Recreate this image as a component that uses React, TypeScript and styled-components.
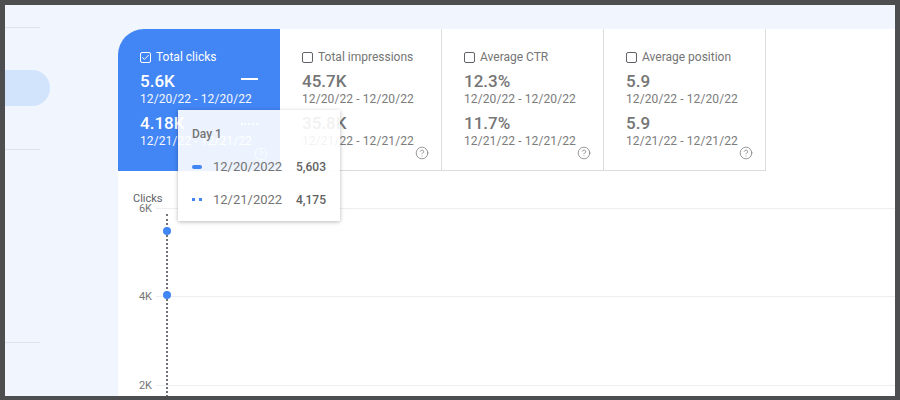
import React from 'react'
import styled, { createGlobalStyle } from 'styled-components'
import { Check, CircleHelp } from 'lucide-react'

const metrics = [
  { title: 'Total clicks', first: '5.6K', second: '4.18K', active: true },
  { title: 'Total impressions', first: '45.7K', second: '35.8K', active: false },
  { title: 'Average CTR', first: '12.3%', second: '11.7%', active: false },
  { title: 'Average position', first: '5.9', second: '5.9', active: false },
]

const App = (): React.ReactElement => (
  <>
    <GlobalStyle />
    <Frame>
      <Sidebar>
        <SideDivider />
        <ActivePill />
        <SideDivider $gap={43} />
        <SideDivider $gap={192} />
      </Sidebar>
      <Panel>
        <Tabs>
          {metrics.map((m) => (
            <Tab key={m.title} $active={m.active}>
              <TabTitle>
                <Checkbox $active={m.active}>
                  {m.active && <Check size={9} strokeWidth={2.5} />}
                </Checkbox>
                {m.title}
              </TabTitle>
              <MetricRow>
                <Value>{m.first}</Value>
                {m.active && <SolidDash />}
              </MetricRow>
              <DateRange>12/20/22 - 12/20/22</DateRange>
              <MetricRow>
                <Value>{m.second}</Value>
                {m.active && <DottedDash />}
              </MetricRow>
              <DateRange>12/21/22 - 12/21/22</DateRange>
              <HelpIcon>
                <CircleHelp size={14} strokeWidth={1.25} />
              </HelpIcon>
            </Tab>
          ))}
        </Tabs>
        <Chart>
          <ChartTitle>Clicks</ChartTitle>
          {['6K', '4K', '2K'].map((label) => (
            <GridRow key={label}>
              <AxisLabel>{label}</AxisLabel>
              <GridLine />
            </GridRow>
          ))}
          <HoverLine />
          <Dot $top={48} />
          <Dot $top={112} />
        </Chart>
        <Tooltip>
          <TooltipTitle>Day 1</TooltipTitle>
          <TooltipRow>
            <PillMark />
            <TooltipDate>12/20/2022</TooltipDate>
            <TooltipValue>5,603</TooltipValue>
          </TooltipRow>
          <TooltipRow>
            <DotsMark>
              <i />
              <i />
            </DotsMark>
            <TooltipDate>12/21/2022</TooltipDate>
            <TooltipValue>4,175</TooltipValue>
          </TooltipRow>
        </Tooltip>
      </Panel>
    </Frame>
  </>
)

export default App

const GlobalStyle = createGlobalStyle`
  html, body {
    margin: 0;
    padding: 0;
    background: #4d4e50;
  }
  body {
    font-family: Roboto, "Liberation Sans", sans-serif;
  }
`
const Frame = styled.div`
  box-sizing: border-box;
  width: 900px;
  height: 400px;
  display: flex;
  overflow: hidden;
  border: solid #4d4e50;
  border-width: 5px 5px 4px 5px;
  background: #f1f6fe;
`
const Sidebar = styled.div`
  flex: 0 0 113px;
  padding-top: 22px;
`
const SideDivider = styled.div<{ $gap?: number }>`
  width: 35px;
  height: 1px;
  margin-top: ${({ $gap }) => $gap || 0}px;
  background: #dfe3ea;
`
const ActivePill = styled.div`
  width: 45px;
  height: 36px;
  margin-top: 42px;
  border-radius: 0 18px 18px 0;
  background: #d2e3fc;
`
const Panel = styled.div`
  position: relative;
  flex: 1;
  margin-top: 24px;
  background: #fff;
  border-top-left-radius: 26px;
`
const Tabs = styled.div`
  display: flex;
`
const Tab = styled.div<{ $active: boolean }>`
  position: relative;
  box-sizing: border-box;
  width: 162px;
  height: 142px;
  padding: 21px 0 0 22px;
  color: ${({ $active }) => ($active ? '#fff' : '#757575')};
  background: ${({ $active }) => ($active ? '#4285f4' : '#fff')};
  border-top-left-radius: ${({ $active }) => ($active ? '26px' : '0')};
  border-right: ${({ $active }) => ($active ? '0' : '1px solid #dadce0')};
  border-bottom: ${({ $active }) => ($active ? '0' : '1px solid #dadce0')};
`
const TabTitle = styled.div`
  display: flex;
  align-items: center;
  gap: 5px;
  height: 14px;
  font-size: 12px;
  line-height: 14px;
`
const Checkbox = styled.span<{ $active: boolean }>`
  box-sizing: border-box;
  display: flex;
  align-items: center;
  justify-content: center;
  width: 11px;
  height: 11px;
  border: 1px solid ${({ $active }) => ($active ? '#fff' : '#5f6368')};
  border-radius: 2px;
`
const MetricRow = styled.div`
  display: flex;
  align-items: center;
  justify-content: space-between;
  width: 118px;
  height: 19px;
  margin-top: 8px;
`
const Value = styled.div`
  font-size: 17px;
  font-weight: 500;
  line-height: 19px;
`
const SolidDash = styled.div`
  width: 17px;
  height: 2px;
  margin-top: -6px;
  background: #fff;
`
const DottedDash = styled.div`
  width: 17px;
  height: 0;
  border-top: 2px dotted rgba(255, 255, 255, 0.9);
`
const DateRange = styled.div`
  margin-top: 1px;
  font-size: 12px;
  line-height: 14px;
  letter-spacing: 0.1px;
  opacity: 0.95;
`
const HelpIcon = styled.div`
  position: absolute;
  right: 12px;
  bottom: 10px;
  width: 14px;
  height: 14px;
  line-height: 0;
`
const Chart = styled.div`
  position: relative;
  padding: 20px 0 0 15px;
`
const ChartTitle = styled.div`
  height: 15px;
  font-size: 11px;
  line-height: 15px;
  color: #5f6368;
`
const GridRow = styled.div`
  display: flex;
  align-items: center;
  height: 16px;
  margin-bottom: 72.5px;
  margin-top: -6px;
  &:nth-of-type(n + 3) {
    margin-top: 0;
  }
`
const AxisLabel = styled.div`
  width: 19px;
  padding-right: 4px;
  text-align: right;
  font-size: 11px;
  color: #757575;
`
const GridLine = styled.div`
  flex: 1;
  height: 1px;
  background: #eceef1;
`
const HoverLine = styled.div`
  position: absolute;
  top: 43px;
  left: 48px;
  bottom: -60px;
  width: 0;
  border-left: 2px dotted #6f7378;
`
const Dot = styled.div<{ $top: number }>`
  position: absolute;
  top: ${({ $top }) => $top + 8}px;
  left: 45px;
  width: 8px;
  height: 8px;
  border-radius: 50%;
  background: #4285f4;
`
const Tooltip = styled.div`
  position: absolute;
  top: 81px;
  left: 60px;
  box-sizing: border-box;
  width: 162px;
  height: 111px;
  padding: 17px 14px 0;
  background: rgba(255, 255, 255, 0.9);
  box-shadow: 0 1px 4px rgba(0, 0, 0, 0.28);
`
const TooltipTitle = styled.div`
  font-size: 12px;
  font-weight: 500;
  line-height: 14px;
  color: #757575;
  margin-bottom: 9px;
`
const TooltipRow = styled.div`
  display: flex;
  align-items: center;
  height: 33px;
`
const PillMark = styled.span`
  width: 10px;
  height: 4px;
  border-radius: 2px;
  background: #4285f4;
`
const DotsMark = styled.span`
  display: flex;
  justify-content: space-between;
  width: 10px;
  i {
    width: 3px;
    height: 3px;
    background: #4285f4;
  }
`
const TooltipDate = styled.span`
  margin-left: 11px;
  font-size: 13px;
  color: #757575;
`
const TooltipValue = styled.span`
  margin-left: auto;
  font-size: 12px;
  font-weight: 500;
  color: #616161;
`
